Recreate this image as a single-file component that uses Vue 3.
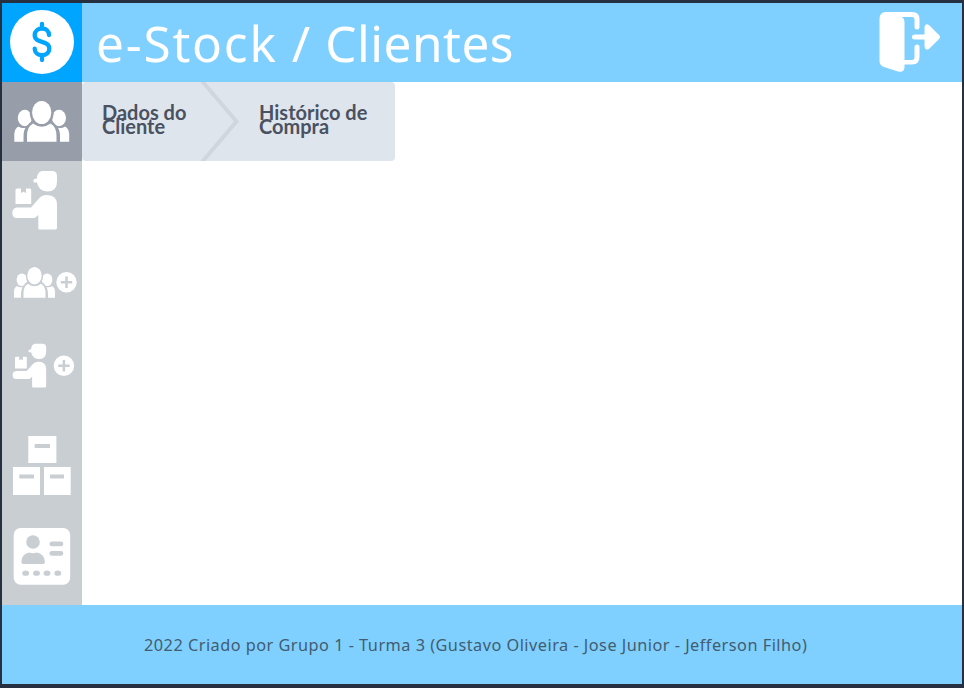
<script setup>
const footerText = '2022 Criado por Grupo 1 - Turma 3 (Gustavo Oliveira - Jose Junior - Jefferson Filho)'
</script>

<template>
  <div class="frame">
    <header class="header">
      <div class="logo">
        <svg width="80" height="79" viewBox="2 3 80 79">
          <circle cx="42" cy="42" r="32" fill="#fff" />
          <path d="M49 35c0-4-3-6.500-7-6.500s-7.300 2.700-7.300 6.600c0 9 14.600 4.500 14.600 13.500 0 4.200-3 6.600-7.300 6.600s-7.300-2.500-7.300-6.500M42 24v4M42 55.500V60" fill="none" stroke="#00a5ff" stroke-width="4.300" stroke-linecap="round" />
        </svg>
      </div>
      <h1 class="title"><span class="brand">e-Stock</span> / <span class="section">Clientes</span></h1>
      <svg class="exit" width="80" height="79" viewBox="882 3 80 79">
        <path d="M886 12H912Q919.500 12 919.500 19V27Q919.500 29.500 917 29.500T914.500 27V19Q914.500 17 912 17H902Q904.500 18.500 904.500 22V60H912Q914.500 60 914.500 57V47Q914.500 44.500 917 44.500T919.500 47V57Q919.500 64.500 912 64.500H904.500V67Q904.500 73 898 71.500L884 67Q879.500 65.500 879.500 61V19Q879.500 12 886 12Z" fill="#fff" />
        <path d="M914.500 34.500H924.500V27.500Q925 22.500 929 25L939 35Q941 37 939 39L929 49Q925 51 924.500 46V39.500H914.500Q912 39.500 912 37T914.500 34.500Z" fill="#fff" />
      </svg>
    </header>
    <div class="body">
      <nav class="sidebar">
        <div class="item active">
          <svg width="80" height="79" viewBox="2 82 80 79" fill="#fff">
            <ellipse cx="24.800" cy="118" rx="7" ry="8.300" />
            <ellipse cx="59" cy="118" rx="7" ry="8.300" />
            <ellipse cx="41.700" cy="112.500" rx="12" ry="14" fill="#979da9" />
            <path d="M24.500 141.700V136Q24.500 124 34 120.500H49.500Q59 124 59 136V141.700Z" fill="#979da9" />
            <path d="M14.300 141.700V134Q14.500 128.500 18.500 126.500Q21.500 128.800 25.500 127.800Q23.500 131 23.500 137V141.700ZM69.200 141.700V134Q69 128.500 65 126.500Q62 128.800 58 127.800Q60 131 60 137V141.700Z" />
            <ellipse cx="41.700" cy="112.500" rx="9.600" ry="11.600" />
            <path d="M27 141.700V136Q27 126.500 33 123.500Q41.700 130 50.500 123.500Q56.500 126.500 56.500 136V141.700Z" />
          </svg>
        </div>
        <div class="item">
          <svg width="80" height="79" viewBox="2 161 80 79" fill="#fff">
            <g id="courier">
              <path d="M42 171H52Q57 171 57 176V182Q57 191.500 47 191.500Q38.500 191 37 182.500H34Q32.500 181 34 179L37 178.500Q37 172 42 171Z" />
              <path d="M17 188.500H21V193L23.500 191.700L26 193V188.500H30Q31.200 188.500 31.200 190V204H15.500V190Q15.500 188.500 17 188.500Z" />
              <path d="M17 207.500H31L38.500 199Q41.500 195 47 195Q57 195 57 205V228Q57 229.500 55 229.500H40Q38.300 229.500 38.300 228V215L36 217Q35.500 218 34 218H17Q12.300 218 12.300 213T17 207.500Z" />
            </g>
          </svg>
        </div>
        <div class="item medium">
          <svg width="80" height="84" viewBox="2 240 80 84" fill="#fff">
            <ellipse cx="21.900" cy="279.700" rx="5.300" ry="6.300" />
            <ellipse cx="47.100" cy="279.700" rx="5.300" ry="6.300" />
            <ellipse cx="34.500" cy="275.700" rx="8.700" ry="10.300" fill="#c9ced3" />
            <path d="M21.700 297.700V293Q21.700 284 28.500 281.500H40.500Q47.300 284 47.300 293V297.700Z" fill="#c9ced3" />
            <path d="M14 297.700V292Q14 287.500 17 286Q19.500 287.800 22.500 287Q21 290 21 294V297.700ZM55 297.700V292Q55 287.500 52 286Q49.500 287.800 46.500 287Q48 290 48 294V297.700Z" />
            <ellipse cx="34.500" cy="275.700" rx="7.200" ry="8.700" />
            <path d="M23.500 297.700V293Q23.500 286 28 283.700Q34.500 288.700 41 283.700Q45.500 286 45.500 293V297.700Z" />
            <circle cx="66.500" cy="282.300" r="10.200" />
            <path d="M60.800 282.300H72.200M66.500 276.600V288" stroke="#c9ced3" stroke-width="2.500" />
          </svg>
        </div>
        <div class="item medium">
          <svg width="80" height="84" viewBox="2 324 80 84" fill="#fff">
            <use href="#courier" transform="translate(3.400 215.400) scale(.75)" />
            <circle cx="63.900" cy="365.800" r="10.200" />
            <path d="M58.200 365.800H69.600M63.900 360.100V371.500" stroke="#c9ced3" stroke-width="2.500" />
          </svg>
        </div>
        <div class="item boxes">
          <svg width="80" height="114" viewBox="2 408 80 114" fill="#fff">
            <path d="M28.300 436H56.400V463H28.300ZM13 467H40V495H13ZM44 467H70.700V495H44Z" />
            <path d="M34.700 444H50V448H34.700ZM19.300 474.500H34V478.500H19.300ZM50 474.500H64V478.500H50Z" fill="#c9ced3" />
          </svg>
        </div>
        <div class="item card">
          <svg width="80" height="83" viewBox="2 522 80 83">
            <rect x="13.700" y="528" width="56.500" height="56.800" rx="7" fill="#fff" />
            <g fill="#c9ced3">
              <circle cx="33" cy="542" r="6.800" />
              <path d="M21.300 562Q21.500 554 29 552.500Q33 554 37 552.500Q44.500 554 45 562Q45 564 43 564H23.500Q21.300 564 21.300 562Z" />
              <rect x="49.500" y="541.500" width="13.800" height="4.800" rx="2.400" />
              <rect x="49.500" y="551" width="13.800" height="4.800" rx="2.400" />
              <ellipse cx="25.700" cy="573.200" rx="3.400" ry="2.600" />
              <ellipse cx="36.500" cy="573.200" rx="3.400" ry="2.600" />
              <ellipse cx="47" cy="573.200" rx="3.400" ry="2.600" />
              <ellipse cx="57.800" cy="573.200" rx="3.400" ry="2.600" />
            </g>
          </svg>
        </div>
      </nav>
      <main class="content">
        <div class="steps">
          <div class="step first">Dados do<br />Cliente</div>
          <svg class="chevron" width="40" height="79" viewBox="0 0 40 79">
            <path d="M0 -1L34.500 39.500L0 80" fill="none" stroke="#d0d6de" stroke-width="4" />
          </svg>
          <div class="step second">Histórico de<br />Compra</div>
        </div>
      </main>
    </div>
    <footer class="footer"><span class="credit">{{ footerText }}</span></footer>
  </div>
</template>

<style>
body { background: #263040; }
</style>

<style scoped>
.frame {
  box-sizing: border-box;
  width: 964px;
  height: 688px;
  padding: 3px 2px 4px;
  background: #263040;
  display: flex;
  flex-direction: column;
  overflow: hidden;
  font-family: "Noto Sans", sans-serif;
}
svg { display: block; overflow: visible; }
.header { height: 79px; display: flex; background: #7fd0ff; flex: none; }
.logo { width: 80px; background: #00a5ff; }
.title {
  margin: 0;
  padding-left: 14px;
  flex: 1;
  color: #fff;
  font-size: 49.5px;
  font-weight: 400;
  line-height: 81px;
  letter-spacing: 0.8px;
  word-spacing: 0.5px;
  white-space: nowrap;
}
.brand { letter-spacing: 1.8px; }
.section { letter-spacing: 0.5px; }
.body { height: 523px; display: flex; background: #fff; }
.sidebar { width: 80px; background: #c9ced3; }
.item { height: 79px; }
.item.active { background: #979da9; }
.item.medium { height: 84px; }
.item.boxes { height: 114px; }
.item.card { height: 83px; }
.content { flex: 1; }
.steps {
  display: flex;
  width: 313px;
  height: 79px;
  border-radius: 4px;
  overflow: hidden;
  background: #dfe5ed;
  color: #4a5261;
  font-family: Lato, sans-serif;
  font-size: 20px;
  font-weight: 700;
  line-height: 14px;
}
.step { padding-top: 23px; white-space: nowrap; }
.first { width: 100px; padding-left: 20px; }
.second { padding-left: 17px; }
.footer {
  height: 79px;
  display: flex;
  padding-left: 142px;
  background: #7fd0ff;
  color: #425c70;
  font-size: 16.3px;
  line-height: 81px;
}
.credit { white-space: nowrap; letter-spacing: 0.485px; }
</style>
